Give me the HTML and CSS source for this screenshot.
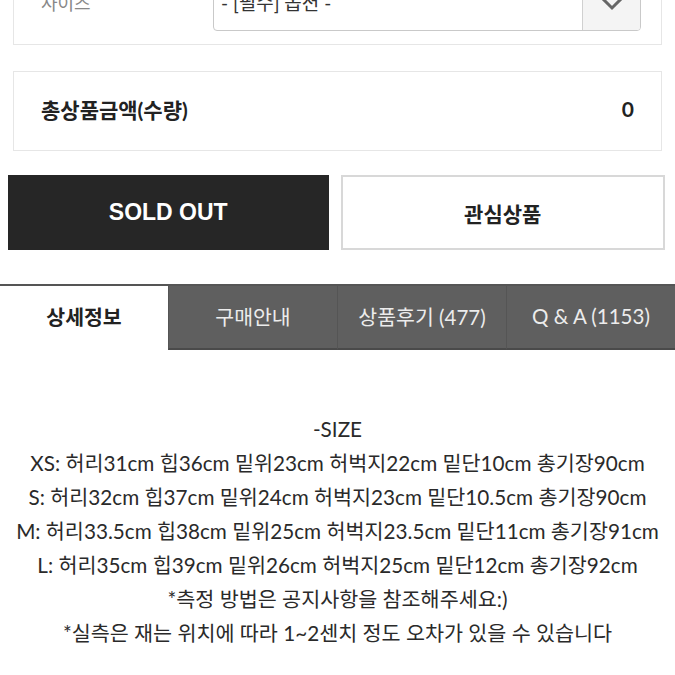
FILE: index.html
```html
<!DOCTYPE html>
<html lang="ko">
<head>
    <meta charset="UTF-8">
    <meta name="viewport" content="width=device-width, initial-scale=1.0">
    <link rel="stylesheet" href="styles.css">
    <title>상품상세</title>
</head>
<body>
    <!-- option select -->
    <div class="option-box">
        <div class="opt-label">사이즈</div>
        <div class="select">
            <div class="select-text">- [필수] 옵션 -</div>
            <div class="select-arrow">
                <svg width="26" height="16" viewBox="0 0 26 16">
                    <polyline points="2,2 13,13 24,2" fill="none" stroke="#666" stroke-width="3"/>
                </svg>
            </div>
        </div>
    </div>

    <!-- total -->
    <div class="total">
        <span class="total-label">총상품금액(수량)</span>
        <span class="total-num">0</span>
    </div>

    <div class="buttons">
        <button class="btn btn-dark">SOLD OUT</button>
        <button class="btn btn-light">관심상품</button>
    </div>

    <!-- tabs -->
    <div class="tabs">
        <div class="tab active">상세정보</div>
        <div class="tab">구매안내</div>
        <div class="tab">상품후기 (477)</div>
        <div class="tab">Q &amp; A (1153)</div>
    </div>

    <div class="detail">
        <p>-SIZE</p>
        <p>XS: 허리31cm 힙36cm 밑위23cm 허벅지22cm 밑단10cm 총기장90cm</p>
        <p>S: 허리32cm 힙37cm 밑위24cm 허벅지23cm 밑단10.5cm 총기장90cm</p>
        <p>M: 허리33.5cm 힙38cm 밑위25cm 허벅지23.5cm 밑단11cm 총기장91cm</p>
        <p>L: 허리35cm 힙39cm 밑위26cm 허벅지25cm 밑단12cm 총기장92cm</p>
        <p>*측정 방법은 공지사항을 참조해주세요:)</p>
        <p>*실측은 재는 위치에 따라 1~2센치 정도 오차가 있을 수 있습니다</p>
    </div>
</body>
</html>
```

FILE: styles.css
```css
body {
    margin: 0;
    background-color: #fff;
    color: #222;
    font-family: Lato, "Noto Sans CJK KR", sans-serif;
}

.option-box {
    display: flex;
    align-items: center;
    margin: -29px 13px 0;
    padding: 13px 20px 13px 0;
    border: 1px solid #e6e6e6;
}
.opt-label {
    width: 199px;
    padding-left: 27px;
    box-sizing: border-box;
    font-size: 18px;
    color: #888;
    align-self: flex-start;
    margin-top: 4px;
}
.select {
    flex: 1;
    display: flex;
    height: 44px;
    border: 1px solid #c9c9c9;
    border-radius: 4px;
    overflow: hidden;
}
.select-text {
    flex: 1;
    padding-left: 7px;
    font-size: 19px;
    color: #333;
    line-height: 34px;
}
.select-arrow {
    width: 58px;
    border-left: 1px solid #d0d0d0;
    background-color: #f4f4f4;
    display: flex;
    justify-content: center;
    align-items: flex-start;
    padding-top: 9px;
    box-sizing: border-box;
}

.total {
    display: flex;
    justify-content: space-between;
    align-items: center;
    height: 78px;
    margin: 26px 13px 0;
    padding: 0 27px;
    border: 1px solid #e6e6e6;
    font-size: 21px;
    font-weight: bold;
}
.total-label {
    margin-top: -5px;
}
.total-num {
    margin-top: -5px;
}

.buttons {
    display: flex;
    gap: 12px;
    margin: 24px 10px 0 8px;
}
.btn {
    flex: 1;
    height: 75px;
    border-radius: 0;
    font-weight: bold;
    cursor: pointer;
}
.btn-dark {
    background-color: #262626;
    border: none;
    color: #fff;
    font-family: "Liberation Sans", "Noto Sans CJK KR", sans-serif;
    font-size: 23px;
}
.btn-light {
    background-color: #fff;
    border: 2px solid #d8d8d8;
    color: #222;
    font-family: "Noto Sans CJK KR", sans-serif;
    font-size: 21px;
}

.tabs {
    display: flex;
    margin-top: 34px;
    border-top: 2px solid #555;
}
.tab {
    flex: 1;
    height: 64px;
    display: flex;
    justify-content: center;
    align-items: center;
    padding-bottom: 3px;
    box-sizing: border-box;
    font-size: 20.5px;
    background-color: #5f5f5f;
    color: #ececec;
    border-left: 1px solid #555;
    border-bottom: 2px solid #4a4a4a;
}
.tab.active {
    background-color: #fff;
    color: #222;
    font-weight: bold;
    border-left: none;
    border-bottom: 2px solid #fff;
}

.detail {
    padding-top: 62px;
    text-align: center;
    font-size: 20.7px;
    color: #2a2a2a;
}
.detail p {
    margin: 0;
    line-height: 34px;
}
```
